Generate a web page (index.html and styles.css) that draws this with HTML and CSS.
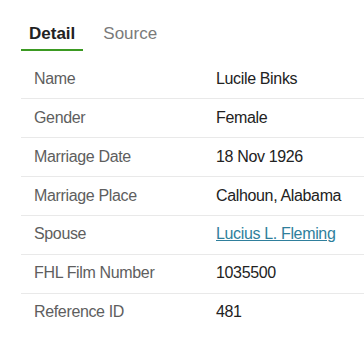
FILE: index.html
```html
<!DOCTYPE html>
<html>
<head>
<meta charset="utf-8">
<link rel="stylesheet" href="styles.css">
</head>
<body>
<div class="tabs">
  <div class="tab active">Detail</div>
  <div class="tab">Source</div>
</div>
<div class="table">
  <div class="row"><div class="label">Name</div><div class="value">Lucile Binks</div></div>
  <div class="row"><div class="label">Gender</div><div class="value">Female</div></div>
  <div class="row"><div class="label">Marriage Date</div><div class="value">18 Nov 1926</div></div>
  <div class="row"><div class="label">Marriage Place</div><div class="value">Calhoun, Alabama</div></div>
  <div class="row"><div class="label">Spouse</div><div class="value"><a class="link" href="#">Lucius L. Fleming</a></div></div>
  <div class="row"><div class="label">FHL Film Number</div><div class="value">1035500</div></div>
  <div class="row last"><div class="label">Reference ID</div><div class="value">481</div></div>
</div>
</body>
</html>
```
FILE: styles.css
```css
html, body {
  margin: 0;
  padding: 0;
  background: #fff;
  font-family: "Liberation Sans", Arial, sans-serif;
}
.tabs {
  display: flex;
  gap: 12px;
  padding: 24px 0 0 21px;
}
.tab {
  padding: 0 8px 5px;
  font-size: 17px;
  line-height: 20px;
  color: #7a7a7a;
  border-bottom: 2.7px solid transparent;
}
.tab.active {
  color: #222;
  font-weight: bold;
  border-bottom-color: #3b9a22;
}
.table {
  margin-top: 9.4px;
  margin-left: 21px;
}
.row {
  display: flex;
  align-items: center;
  height: 36.9px;
  padding-bottom: 1px;
  box-sizing: content-box;
  border-bottom: 1px solid #e9e9e9;
  font-size: 16px;
  letter-spacing: -0.35px;
}
.row.last {
  border-bottom: none;
}
.label {
  width: 182px;
  padding-left: 13px;
  box-sizing: border-box;
  color: #5e5e5e;
}
.value {
  color: #222;
  padding-left: 13px;
}
.link {
  color: #2f7f9c;
  text-decoration: underline;
}
```
